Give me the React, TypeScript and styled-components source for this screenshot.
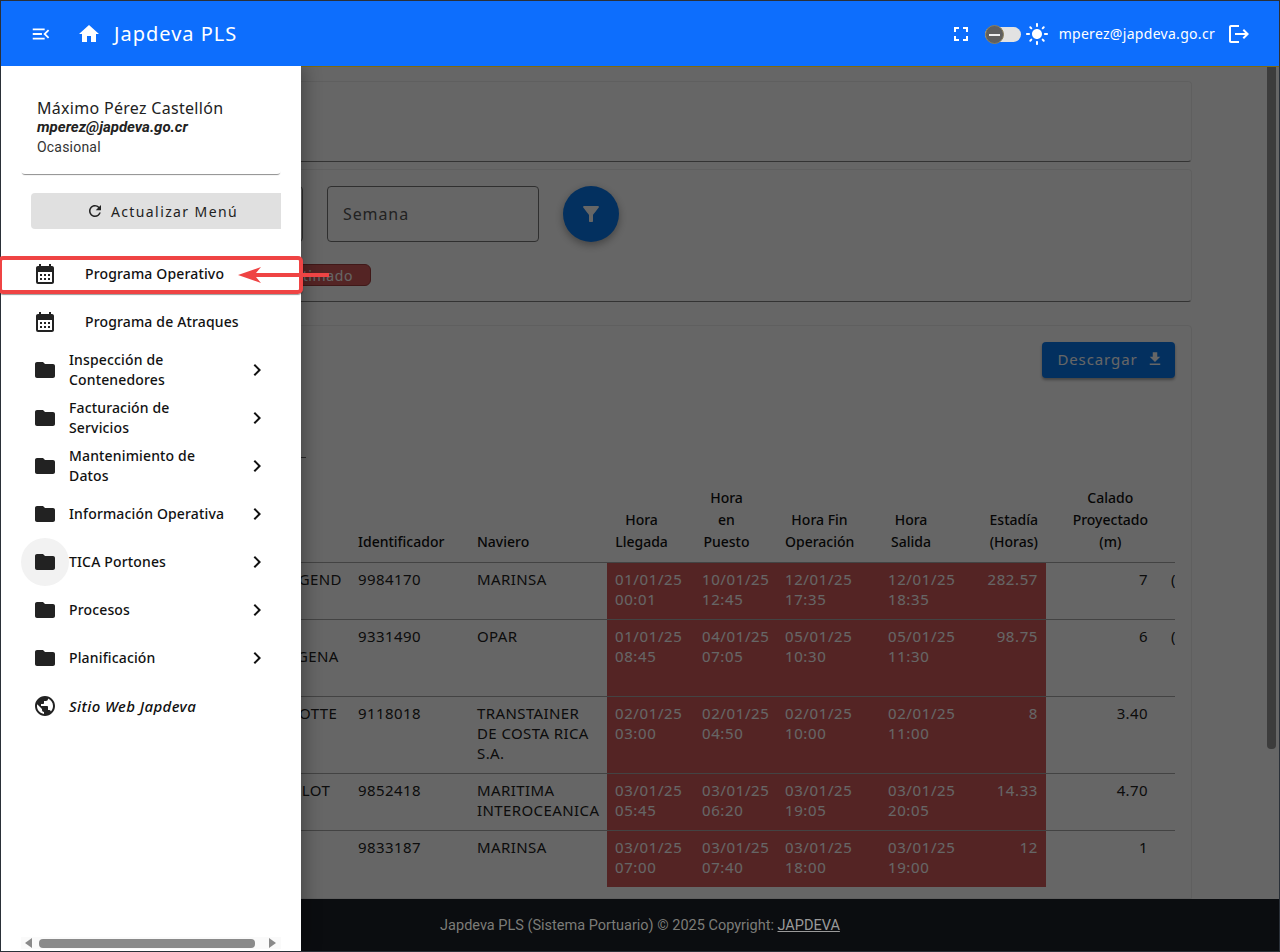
import styled, { createGlobalStyle } from 'styled-components';
import {
  MdCalendarMonth,
  MdChevronRight,
  MdFileDownload,
  MdFilterAlt,
  MdFolder,
  MdHome,
  MdLogout,
  MdPublic,
  MdRefresh,
  MdFullscreen,
  MdLightMode,
  MdMenuOpen,
} from 'react-icons/md';

const UI_FONT = '"Noto Sans", "Open Sans", sans-serif';

const GlobalStyle = createGlobalStyle`
  html, body {
    margin: 0;
    padding: 0;
    height: 100%;
    overflow: hidden;
    background: #fff;
    font-family: ${UI_FONT};
  }
  * { box-sizing: border-box; }
`;

const Screen = styled.div`
  position: relative;
  width: 1280px;
  height: 952px;
  display: flex;
  flex-direction: column;
  overflow: hidden;
  background: #fff;
`;

const ScreenEdge = styled.div`
  position: absolute;
  inset: 0;
  z-index: 3;
  border: 1px solid #2a3038;
  pointer-events: none;
`;

const TopBar = styled.header`
  position: relative;
  z-index: 3;
  height: 66px;
  flex: none;
  display: flex;
  align-items: center;
  padding: 1px 29px 0 30px;
  background: #0d6efd;
  color: #fff;
`;

const MenuButton = styled.span`
  display: flex;
  width: 22px;
  margin-right: 25px;
  font-size: 22px;
`;

const HomeIcon = styled.span`
  display: flex;
  margin-right: 13px;
  font-size: 24px;
`;

const Brand = styled.span`
  flex: 1;
  font-size: 20px;
  letter-spacing: 1px;
`;

const BarIcon = styled.span`
  display: flex;
  font-size: 24px;
`;

const Toggle = styled.span`
  position: relative;
  width: 36px;
  height: 15px;
  margin: 2px 4px 0 12px;
  border-radius: 8px;
  background: #e2e2e2;
`;

const ToggleKnob = styled.span`
  position: absolute;
  left: 0;
  top: -2px;
  width: 19px;
  height: 19px;
  display: flex;
  align-items: center;
  justify-content: center;
  border-radius: 50%;
  background: #5f5f5f;
  border: 1px solid #8a7f5c;
  &::after {
    content: '';
    width: 11px;
    height: 2px;
    background: #eee;
  }
`;

const BarEmail = styled.span`
  margin: 0 12px 0 10px;
  font-size: 14px;
  letter-spacing: 0.3px;
`;

const Body = styled.div`
  flex: 1;
  min-height: 0;
  display: flex;
`;

const Page = styled.div`
  flex: 1;
  min-width: 0;
  display: flex;
  flex-direction: column;
  overflow: hidden;
  border-top: 1px solid #7d6a10;
`;

const Content = styled.main`
  flex: 1;
  min-height: 0;
  display: flex;
  flex-direction: column;
  overflow: hidden;
  padding: 14px 88px 0 89px;
`;

const Card = styled.section<{ $height: number; $gap: number }>`
  flex: none;
  height: ${(p) => p.$height}px;
  margin-bottom: ${(p) => p.$gap}px;
  background: #fff;
  border: 1px solid #eee;
  border-bottom-color: #808080;
  border-radius: 4px;
`;

const FilterRow = styled.div`
  display: flex;
  align-items: center;
  gap: 24px;
  padding: 16px 0 0 0;
`;

const Field = styled.div<{ $width: number }>`
  width: ${(p) => p.$width}px;
  height: 56px;
  display: flex;
  align-items: center;
  padding-left: 15px;
  border: 1px solid #777;
  border-radius: 4px;
  font-size: 16px;
  letter-spacing: 0.9px;
  color: #555;
`;

const RoundButton = styled.span`
  width: 56px;
  height: 56px;
  display: flex;
  align-items: center;
  justify-content: center;
  border-radius: 50%;
  background: #0878ee;
  color: #fff;
  font-size: 24px;
  box-shadow: 0 3px 8px rgba(0, 0, 0, 0.35);
`;

const LegendRow = styled.div`
  display: flex;
  justify-content: flex-end;
  width: 281px;
  margin-top: 22px;
`;

const Badge = styled.span`
  height: 22px;
  padding: 0 17px 0 60px;
  display: flex;
  align-items: center;
  border: 1px solid #a03c3c;
  border-radius: 6px;
  background: #d25a5a;
  color: #fff;
  font-size: 14px;
  letter-spacing: 0.6px;
`;

const TableCard = styled.section`
  flex: 1;
  min-height: 0;
  padding: 16px;
  background: #fff;
  border: 1px solid #eee;
  border-radius: 4px 4px 0 0;
  overflow: hidden;
`;

const CardActions = styled.div`
  display: flex;
  justify-content: flex-end;
`;

const DownloadButton = styled.span`
  width: 133px;
  height: 36px;
  display: flex;
  align-items: center;
  justify-content: center;
  gap: 8px;
  padding: 0 0 2px 4px;
  border-radius: 4px;
  background: #0878ee;
  color: #fff;
  font-size: 15px;
  letter-spacing: 0.9px;
  box-shadow: 0 2px 3px rgba(0, 0, 0, 0.35);
  svg { font-size: 18px; }
`;

const SearchLine = styled.div`
  width: 200px;
  height: 1px;
  margin-top: 79px;
  background: #666;
`;

const TableClip = styled.div`
  margin-top: 10px;
  overflow: hidden;
`;

const Table = styled.table`
  width: 1194px;
  table-layout: fixed;
  border-collapse: collapse;
  font-size: 15px;
  color: #222;
`;

const Th = styled.th<{ $align?: 'left' | 'center' | 'right' }>`
  height: 94px;
  padding: 0 ${(p) => (p.$align === 'center' ? '26px' : '8px')} 9px 8px;
  vertical-align: bottom;
  text-align: ${(p) => p.$align || 'left'};
  font-weight: 500;
  font-size: 14px;
  line-height: 22px;
  color: #111;
`;

const HeadLines = styled.span`
  display: inline-block;
  text-align: center;
`;

const Row = styled.tr`
  border-top: 1px solid #a8a8a8;
`;

const Td = styled.td<{ $right?: boolean; $late?: boolean; $lead?: number; $center?: boolean }>`
  padding: 6px 8px 10px ${(p) => p.$lead ?? 8}px;
  vertical-align: top;
  line-height: 20px;
  letter-spacing: ${(p) => (p.$late ? '0.6px' : '0.4px')};
  white-space: pre-line;
  text-align: ${(p) => (p.$right ? 'right' : p.$center ? 'center' : 'left')};
  background: ${(p) => (p.$late ? '#d25a5a' : 'transparent')};
  color: ${(p) => (p.$late ? '#fff' : '#222')};
`;

const Footer = styled.footer`
  position: relative;
  z-index: 2;
  height: 53px;
  flex: none;
  display: flex;
  align-items: center;
  justify-content: center;
  background: #0b0d10;
  color: #7c7c78;
  font-family: Roboto, sans-serif;
  font-size: 14.5px;
  u { color: #9a9a9a; }
`;

const PageThumb = styled.div`
  position: absolute;
  top: 67px;
  right: 4px;
  z-index: 2;
  width: 9px;
  height: 682px;
  border-radius: 0 0 4px 4px;
  background: #3c3c3c;
`;

const Backdrop = styled.div`
  position: absolute;
  top: 67px;
  left: 0;
  right: 0;
  bottom: 0;
  z-index: 1;
  background: rgba(0, 0, 0, 0.6);
`;

const Drawer = styled.aside`
  position: absolute;
  top: 66px;
  left: 0;
  bottom: 0;
  z-index: 2;
  width: 301px;
  display: flex;
  flex-direction: column;
  background: #fff;
  box-shadow: 4px 0 16px rgba(0, 0, 0, 0.3);
`;

const ProfileCard = styled.div`
  height: 92px;
  margin: 16px 20px 0 21px;
  padding: 16px;
  border-radius: 4px;
  box-shadow: 0 2px 1px -1px rgba(0, 0, 0, 0.45);
`;

const ProfileName = styled.div`
  font-size: 16px;
  line-height: 20px;
  letter-spacing: 0.3px;
  color: #222;
`;

const ProfileMail = styled.div`
  font-family: Roboto, sans-serif;
  font-size: 15px;
  line-height: 18px;
  font-weight: 700;
  font-style: italic;
  color: #222;
`;

const ProfileRole = styled.div`
  margin-top: 2px;
  font-family: Roboto, sans-serif;
  font-size: 14px;
  line-height: 18px;
  letter-spacing: 0.2px;
  color: #333;
`;

const RefreshButton = styled.div`
  height: 36px;
  margin: 19px 20px 0 31px;
  padding-left: 12px;
  display: flex;
  align-items: center;
  justify-content: center;
  gap: 7px;
  border-radius: 4px 0 0 4px;
  background: #e0e0e0;
  color: #222;
  font-size: 14px;
  letter-spacing: 1.4px;
  svg { font-size: 18px; }
`;

const Menu = styled.nav`
  margin-top: 21px;
  display: flex;
  flex-direction: column;
`;

const MenuItem = styled.div`
  position: relative;
  height: 48px;
  display: flex;
  align-items: center;
  padding: 0 32px 0 33px;
  color: #111;
  font-size: 14px;
  font-weight: 500;
  line-height: 20px;
  letter-spacing: 0.15px;
  svg { flex: none; }
`;

const ItemIcon = styled.span`
  position: relative;
  display: flex;
  width: 36px;
  font-size: 24px;
  color: #222;
`;

const LeafLabel = styled.span`
  margin-left: 16px;
`;

const GroupLabel = styled.span`
  position: relative;
  flex: 1;
  padding-right: 16px;
`;

const WebLabel = styled.span`
  font-size: 15px;
  font-style: italic;
  letter-spacing: 0.4px;
`;

const HoverHalo = styled.span`
  position: absolute;
  left: 21px;
  top: 0;
  width: 48px;
  height: 48px;
  border-radius: 50%;
  background: #f2f2f2;
`;

const ChevronIcon = styled.span`
  display: flex;
  font-size: 24px;
`;

const DrawerScroll = styled.div`
  position: absolute;
  left: 21px;
  right: 20px;
  bottom: 3px;
  height: 12px;
  padding-left: 4px;
  display: flex;
  align-items: center;
  gap: 7px;
  background: #fafafa;
`;

const ScrollArrow = styled.span<{ $dir: 'left' | 'right' }>`
  width: 0;
  height: 0;
  border-top: 5px solid transparent;
  border-bottom: 5px solid transparent;
  ${(p) => (p.$dir === 'left' ? 'border-right' : 'border-left')}: 7px solid #8a8a8a;
  ${(p) => (p.$dir === 'right' ? 'margin-left: 7px;' : '')}
`;

const DrawerThumb = styled.span`
  width: 216px;
  height: 9px;
  border-radius: 4px;
  background: #8a8a8a;
`;

const ActiveFrame = styled.div`
  position: absolute;
  top: 256px;
  left: -2px;
  width: 305px;
  height: 38px;
  z-index: 4;
  border: 4px solid #ef4444;
  border-radius: 5px;
  box-shadow: 0 1px 1px rgba(0, 0, 0, 0.4);
  pointer-events: none;
`;

const ArrowMark = styled.svg`
  position: absolute;
  top: 262px;
  left: 236px;
  z-index: 5;
`;

type Sailing = {
  vessel: string;
  id: string;
  line: string;
  arrive: string;
  berth: string;
  finish: string;
  leave: string;
  stay: string;
  draft: string;
  cargo: string;
};

const sailings: Sailing[] = [
  { vessel: 'SEA LEGEND', id: '9984170', line: 'MARINSA', arrive: '01/01/25\n00:01', berth: '10/01/25\n12:45', finish: '12/01/25\n17:35', leave: '12/01/25\n18:35', stay: '282.57', draft: '7', cargo: '(Contenedores)' },
  { vessel: 'MSC\nCARTAGENA\nII', id: '9331490', line: 'OPAR', arrive: '01/01/25\n08:45', berth: '04/01/25\n07:05', finish: '05/01/25\n10:30', leave: '05/01/25\n11:30', stay: '98.75', draft: '6', cargo: '(Contenedores)' },
  { vessel: 'CHARLOTTE', id: '9118018', line: 'TRANSTAINER\nDE COSTA RICA\nS.A.', arrive: '02/01/25\n03:00', berth: '02/01/25\n04:50', finish: '02/01/25\n10:00', leave: '02/01/25\n11:00', stay: '8', draft: '3.40', cargo: '\npor contenedores' },
  { vessel: 'MSC PILOT', id: '9852418', line: 'MARITIMA\nINTEROCEANICA', arrive: '03/01/25\n05:45', berth: '03/01/25\n06:20', finish: '03/01/25\n19:05', leave: '03/01/25\n20:05', stay: '14.33', draft: '4.70', cargo: '' },
  { vessel: '', id: '9833187', line: 'MARINSA', arrive: '03/01/25\n07:00', berth: '03/01/25\n07:40', finish: '03/01/25\n18:00', leave: '03/01/25\n19:00', stay: '12', draft: '1', cargo: '' },
];

const columnWidths = [244, 119, 138, 87, 83, 103, 80, 86, 110, 144];

const menuGroups = [
  'Inspección de Contenedores',
  'Facturación de Servicios',
  'Mantenimiento de Datos',
  'Información Operativa',
  'TICA Portones',
  'Procesos',
  'Planificación',
];

export default function App() {
  return (
    <Screen>
      <GlobalStyle />
      <TopBar>
        <MenuButton>
          <MdMenuOpen />
        </MenuButton>
        <HomeIcon>
          <MdHome />
        </HomeIcon>
        <Brand>Japdeva PLS</Brand>
        <BarIcon>
          <MdFullscreen />
        </BarIcon>
        <Toggle>
          <ToggleKnob />
        </Toggle>
        <BarIcon>
          <MdLightMode />
        </BarIcon>
        <BarEmail>mperez@japdeva.go.cr</BarEmail>
        <BarIcon>
          <MdLogout />
        </BarIcon>
      </TopBar>

      <Body>
        <Page>
          <Content>
            <Card $height={81} $gap={7} />
            <Card $height={133} $gap={23}>
              <FilterRow>
                <Field $width={213} />
                <Field $width={212}>Semana</Field>
                <RoundButton>
                  <MdFilterAlt />
                </RoundButton>
              </FilterRow>
              <LegendRow>
                <Badge>Estimado</Badge>
              </LegendRow>
            </Card>
            <TableCard>
              <CardActions>
                <DownloadButton>
                  Descargar <MdFileDownload />
                </DownloadButton>
              </CardActions>
              <SearchLine />
              <TableClip>
                <Table>
                  <colgroup>
                    {columnWidths.map((w, i) => (
                      <col key={i} width={w} />
                    ))}
                  </colgroup>
                  <thead>
                    <tr>
                      <Th />
                      <Th>Identificador</Th>
                      <Th>Naviero</Th>
                      <Th $align="center">Hora<br />Llegada</Th>
                      <Th $align="center">Hora<br />en<br />Puesto</Th>
                      <Th $align="center">Hora Fin<br />Operación</Th>
                      <Th $align="center">Hora<br />Salida</Th>
                      <Th $align="right">
                        <HeadLines>Estadía<br />(Horas)</HeadLines>
                      </Th>
                      <Th $align="right">
                        <HeadLines>Calado<br />Proyectado<br />(m)</HeadLines>
                      </Th>
                      <Th />
                    </tr>
                  </thead>
                  <tbody>
                    {sailings.map((s) => (
                      <Row key={s.id}>
                        <Td $lead={144}>{s.vessel}</Td>
                        <Td>{s.id}</Td>
                        <Td>{s.line}</Td>
                        <Td $late>{s.arrive}</Td>
                        <Td $late>{s.berth}</Td>
                        <Td $late>{s.finish}</Td>
                        <Td $late>{s.leave}</Td>
                        <Td $late $right>{s.stay}</Td>
                        <Td $right>{s.draft}</Td>
                        <Td $center>{s.cargo}</Td>
                      </Row>
                    ))}
                  </tbody>
                </Table>
              </TableClip>
            </TableCard>
          </Content>
          <Footer>
            <span>
              Japdeva PLS (Sistema Portuario) © 2025 Copyright: <u>JAPDEVA</u>
            </span>
          </Footer>
        </Page>
      </Body>

      <Backdrop />
      <PageThumb />

      <Drawer>
        <ProfileCard>
          <ProfileName>Máximo Pérez Castellón</ProfileName>
          <ProfileMail>mperez@japdeva.go.cr</ProfileMail>
          <ProfileRole>Ocasional</ProfileRole>
        </ProfileCard>
        <RefreshButton>
          <MdRefresh /> Actualizar Menú
        </RefreshButton>
        <Menu>
          <MenuItem>
            <ItemIcon><MdCalendarMonth /></ItemIcon>
            <LeafLabel>Programa Operativo</LeafLabel>
          </MenuItem>
          <MenuItem>
            <ItemIcon><MdCalendarMonth /></ItemIcon>
            <LeafLabel>Programa de Atraques</LeafLabel>
          </MenuItem>
          {menuGroups.map((label) => (
            <MenuItem key={label}>
              {label === 'TICA Portones' && <HoverHalo />}
              <ItemIcon><MdFolder /></ItemIcon>
              <GroupLabel>{label}</GroupLabel>
              <ChevronIcon><MdChevronRight /></ChevronIcon>
            </MenuItem>
          ))}
          <MenuItem>
            <ItemIcon><MdPublic /></ItemIcon>
            <WebLabel>Sitio Web Japdeva</WebLabel>
          </MenuItem>
        </Menu>
        <DrawerScroll>
          <ScrollArrow $dir="left" />
          <DrawerThumb />
          <ScrollArrow $dir="right" />
        </DrawerScroll>
      </Drawer>

      <ActiveFrame />
      <ArrowMark width="96" height="26" viewBox="0 0 96 26">
        <path d="M2 13 L25 5 L20 11 L93 11 L93 15 L20 15 L25 21 Z" fill="#ef4444" />
      </ArrowMark>
      <ScreenEdge />
    </Screen>
  );
}
